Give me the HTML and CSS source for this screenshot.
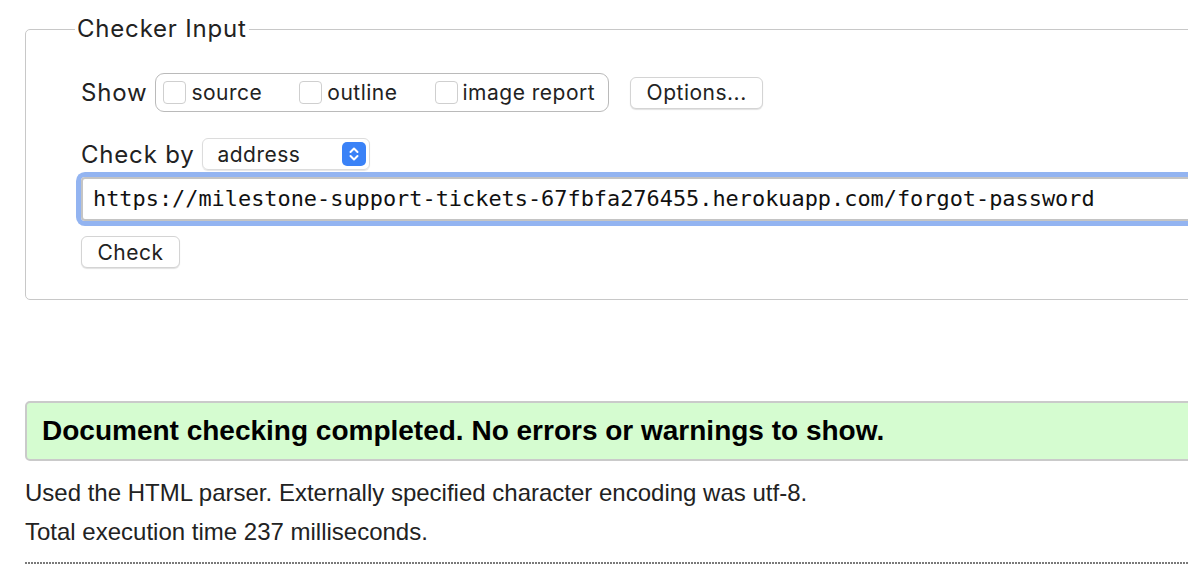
FILE: index.html
```html
<!DOCTYPE html>
<html lang="en">
<head>
<meta charset="utf-8">
<title>Nu Html Checker</title>
<link rel="stylesheet" href="styles.css">
</head>
<body>
<div class="page">
  <form class="checker">
    <fieldset class="input-set">
      <legend class="legend">Checker Input</legend>
      <div class="row show-row">
        <span class="label">Show</span>
        <div class="toggles">
          <label class="toggle"><span class="box"></span>source</label>
          <label class="toggle"><span class="box"></span>outline</label>
          <label class="toggle"><span class="box"></span>image report</label>
        </div>
        <button type="button" class="btn options">Options...</button>
      </div>
      <div class="row by-row">
        <span class="label">Check by</span>
        <div class="select">
          <span class="select-text">address</span>
          <span class="stepper">
            <svg width="24" height="24" viewBox="0 0 24 24"><path d="M8.5 10 L12 6.5 L15.5 10" fill="none" stroke="#fff" stroke-width="2" stroke-linecap="round" stroke-linejoin="round"/><path d="M8.5 14 L12 17.5 L15.5 14" fill="none" stroke="#fff" stroke-width="2" stroke-linecap="round" stroke-linejoin="round"/></svg>
          </span>
        </div>
      </div>
      <div class="url">https://milestone-support-tickets-67fbfa276455.herokuapp.com/forgot-password</div>
      <button type="button" class="btn check">Check</button>
    </fieldset>
  </form>
  <div class="results">
    <p class="success">Document checking completed. No errors or warnings to show.</p>
    <p class="info">Used the HTML parser. Externally specified character encoding was utf-8.</p>
    <p class="info">Total execution time 237 milliseconds.</p>
    <hr class="rule">
  </div>
</div>
</body>
</html>
```
FILE: styles.css
```css
html, body {
  margin: 0;
  padding: 0;
  background: #fff;
  overflow: hidden;
}
body {
  width: 1188px;
  height: 580px;
}
.page {
  width: 1300px;
  padding-left: 25px;
  font-family: Inter, "Liberation Sans", sans-serif;
  color: #222;
}
.checker {
  margin: 0;
  padding-top: 15px;
}
.input-set {
  margin: 0;
  border: 1px solid #c8c8c8;
  border-radius: 5px;
  padding: 0 0 31px 49px;
  min-width: 0;
}
.legend {
  padding: 0 2px;
  font-size: 24px;
  letter-spacing: 0.8px;
  line-height: 28px;
  color: #222;
}
.row {
  display: flex;
  align-items: center;
  padding-left: 6px;
}
.show-row {
  margin-top: 30px;
  height: 39px;
}
.label {
  font-size: 24px;
  letter-spacing: 0.8px;
  color: #222;
}
.toggles {
  display: flex;
  align-items: center;
  margin-left: 8px;
  height: 37px;
  padding: 0 13px 0 7px;
  border: 1px solid #bababa;
  border-radius: 9px;
}
.toggle {
  display: flex;
  align-items: center;
  font-size: 21px;
  letter-spacing: 0.5px;
  color: #222;
  margin-right: 37px;
}
.toggle:last-child {
  margin-right: 0;
}
.box {
  width: 21px;
  height: 21px;
  border: 1px solid #cfcfcf;
  border-radius: 4px;
  margin-right: 5px;
  background: #fff;
}
.btn {
  font-family: Inter, "Liberation Sans", sans-serif;
  font-size: 21px;
  letter-spacing: 0.5px;
  color: #222;
  background: #fff;
  border: 1px solid #d4d4d4;
  border-radius: 6px;
  box-shadow: 0 1px 1px rgba(0,0,0,0.12);
  height: 32px;
  padding: 0;
  cursor: default;
}
.options {
  margin-left: 21px;
  width: 133px;
}
.by-row {
  margin-top: 26px;
  height: 32px;
}
.select {
  display: flex;
  align-items: center;
  justify-content: space-between;
  margin-left: 8px;
  width: 168px;
  height: 32px;
  box-sizing: border-box;
  border: 1px solid #dcdcdc;
  border-radius: 6px;
  box-shadow: 0 1px 1px rgba(0,0,0,0.1);
  padding: 0 3px 0 14px;
  font-size: 21px;
  letter-spacing: 0.5px;
  color: #222;
}
.stepper {
  display: flex;
  width: 24px;
  height: 24px;
  border-radius: 5px;
  background: #3a82f7;
}
.url {
  margin: 7px 0 0 6px;
  height: 44px;
  box-sizing: border-box;
  border: 2px solid #c4c4c4;
  border-radius: 4px;
  box-shadow: 0 0 0 5px #93b4f1;
  padding: 0 0 0 10px;
  font-family: "DejaVu Sans Mono", "Liberation Mono", monospace;
  font-size: 21.9px;
  line-height: 40px;
  color: #111;
  white-space: nowrap;
}
.check {
  display: block;
  margin: 15px 0 0 6px;
  width: 99px;
}
.results {
  margin-top: 101px;
  font-family: "Liberation Sans", Arial, sans-serif;
}
.success {
  margin: 0;
  height: 60px;
  box-sizing: border-box;
  background: #d5fcd0;
  border: 2px solid #cacaca;
  border-radius: 5px;
  padding-left: 15px;
  font-size: 28px;
  font-weight: bold;
  line-height: 56px;
  color: #000;
}
.info {
  margin: 0;
  font-size: 24px;
  line-height: 39px;
  color: #222;
}
.success + .info {
  margin-top: 12px;
}
.rule {
  margin: 11px 0 0 0;
  border: 0;
  height: 2px;
  background: repeating-linear-gradient(to right, #7a7a7a 0 2px, transparent 2px 3px);
}
```
